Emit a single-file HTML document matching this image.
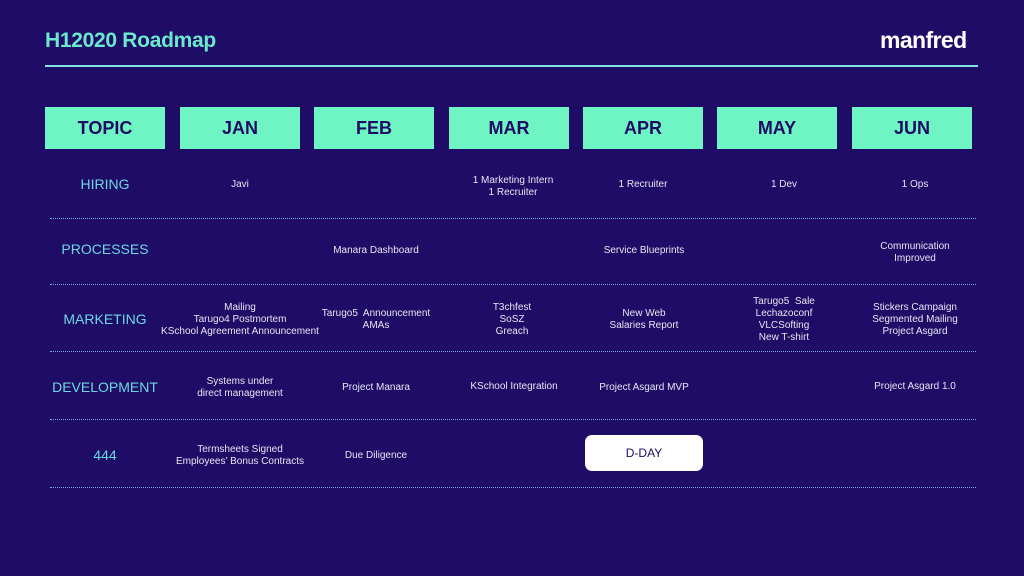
<!DOCTYPE html>
<html><head><meta charset="utf-8"><style>
*{margin:0;padding:0;box-sizing:border-box}
body{width:1024px;height:576px;background:#1e0c66;font-family:"Liberation Sans",sans-serif;position:relative;overflow:hidden;color:#e6e6f2}
.title{position:absolute;left:45px;top:29px;font-size:21px;font-weight:bold;color:#6ce9cc;letter-spacing:-0.3px}
.logo{position:absolute;left:880px;top:27px;font-size:23px;font-weight:bold;color:#fff;letter-spacing:-0.6px}
.rule{position:absolute;left:45px;top:65px;width:933px;height:2px;background:#80e4e6}
.hb{position:absolute;top:107px;width:120px;height:42px;background:#6ff5c4;color:#1d0b64;font-weight:bold;font-size:18px;display:flex;align-items:center;justify-content:center;padding-top:1px}
.dot{position:absolute;left:50px;width:926px;border-top:1px dotted #7aa8e8}
.c{position:absolute;width:170px;margin-left:-85px;text-align:center;font-size:10px;line-height:12px;transform:translateY(-50%)}
.t{position:absolute;width:160px;margin-left:-80px;text-align:center;font-size:14px;color:#6ed8e0;transform:translateY(-50%)}
.dday{position:absolute;left:585px;top:435px;width:118px;height:36px;background:#fff;border-radius:7px;color:#1d0b64;font-size:12px;display:flex;align-items:center;justify-content:center}
</style></head><body>
<div class="title">H12020 Roadmap</div>
<div class="logo">manfred</div>
<div class="rule"></div>
<div class="hb" style="left:45px">TOPIC</div>
<div class="hb" style="left:180px">JAN</div>
<div class="hb" style="left:314px">FEB</div>
<div class="hb" style="left:449px">MAR</div>
<div class="hb" style="left:583px">APR</div>
<div class="hb" style="left:717px">MAY</div>
<div class="hb" style="left:852px">JUN</div>

<div class="dot" style="top:218px"></div>
<div class="dot" style="top:284px"></div>
<div class="dot" style="top:351px"></div>
<div class="dot" style="top:419px"></div>
<div class="dot" style="top:487px"></div>

<div class="t" style="left:105px;top:184px">HIRING</div>
<div class="c" style="left:240px;top:185px">Javi</div>
<div class="c" style="left:513px;top:187px">1 Marketing Intern<br>1 Recruiter</div>
<div class="c" style="left:643px;top:185px">1 Recruiter</div>
<div class="c" style="left:784px;top:185px">1 Dev</div>
<div class="c" style="left:915px;top:185px">1 Ops</div>

<div class="t" style="left:105px;top:249px">PROCESSES</div>
<div class="c" style="left:376px;top:251px">Manara Dashboard</div>
<div class="c" style="left:644px;top:251px">Service Blueprints</div>
<div class="c" style="left:915px;top:253px">Communication<br>Improved</div>

<div class="t" style="left:105px;top:319px">MARKETING</div>
<div class="c" style="left:240px;top:320px">Mailing<br>Tarugo4 Postmortem<br>KSchool Agreement Announcement</div>
<div class="c" style="left:376px;top:320px">Tarugo5&nbsp; Announcement<br>AMAs</div>
<div class="c" style="left:512px;top:320px">T3chfest<br>SoSZ<br>Greach</div>
<div class="c" style="left:644px;top:320px">New Web<br>Salaries Report</div>
<div class="c" style="left:784px;top:320px">Tarugo5&nbsp; Sale<br>Lechazoconf<br>VLCSofting<br>New T-shirt</div>
<div class="c" style="left:915px;top:320px">Stickers Campaign<br>Segmented Mailing<br>Project Asgard</div>

<div class="t" style="left:105px;top:387px">DEVELOPMENT</div>
<div class="c" style="left:240px;top:388px">Systems under<br>direct management</div>
<div class="c" style="left:376px;top:388px">Project Manara</div>
<div class="c" style="left:514px;top:387px">KSchool Integration</div>
<div class="c" style="left:644px;top:388px">Project Asgard MVP</div>
<div class="c" style="left:915px;top:387px">Project Asgard 1.0</div>

<div class="t" style="left:105px;top:455px">444</div>
<div class="c" style="left:240px;top:456px">Termsheets Signed<br>Employees’ Bonus Contracts</div>
<div class="c" style="left:376px;top:456px">Due Diligence</div>
<div class="dday">D-DAY</div>
</body></html>
